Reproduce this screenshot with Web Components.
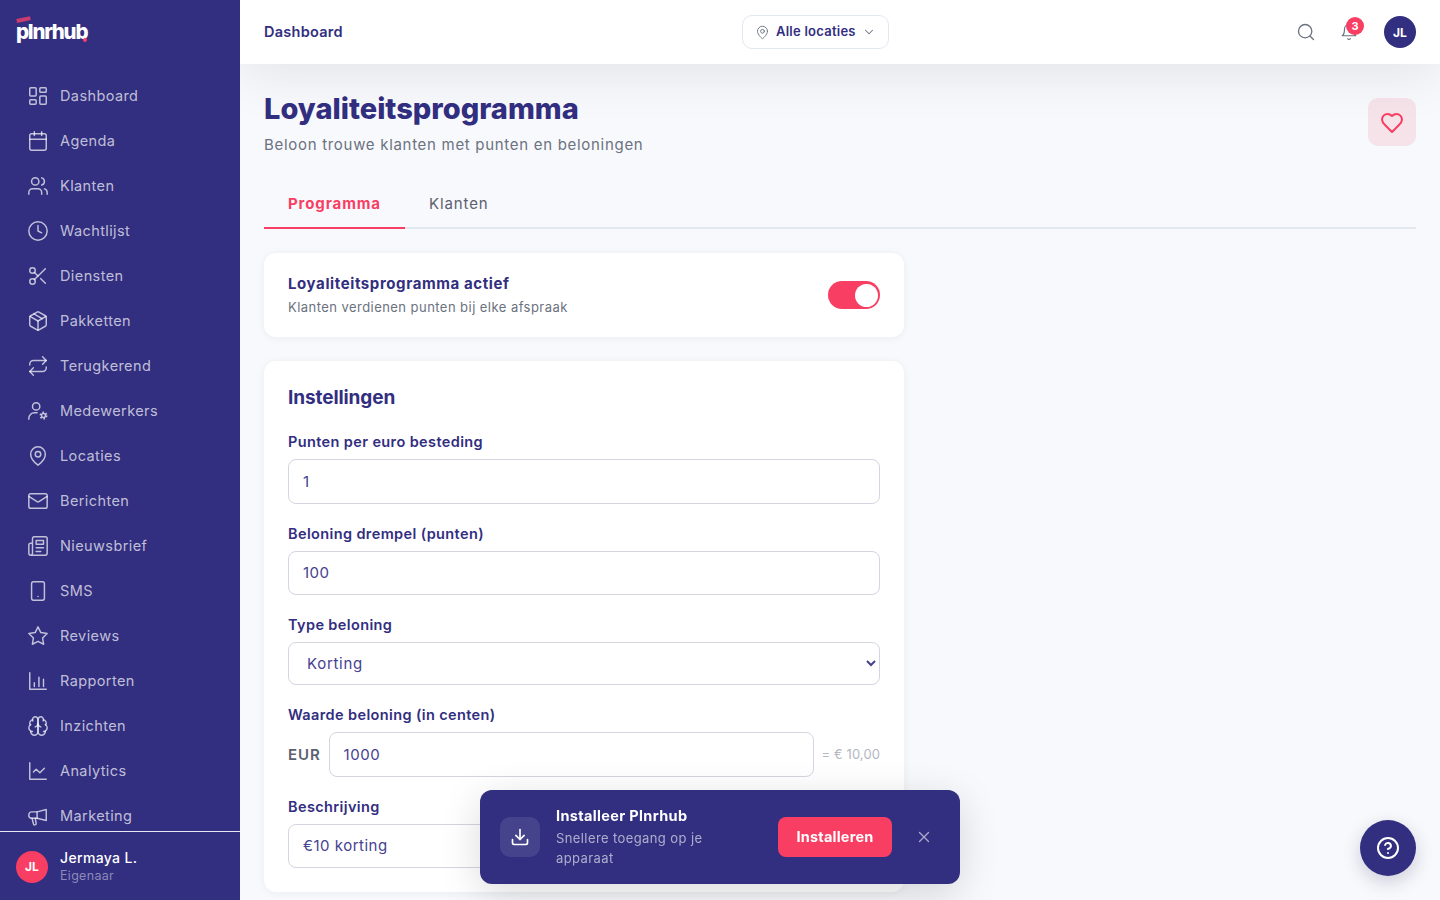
<!DOCTYPE html>
<html lang="nl">
<head>
<meta charset="utf-8">
<title>Loyaliteitsprogramma</title>
<style>
	html, body { margin: 0; height: 100%; overflow: hidden; }
	body { font-family: Inter, "Liberation Sans", sans-serif; background: #f8f9fc; color: #322e80; }
</style>
</head>
<body>
<app-shell>
	<side-nav slot="side">
		<nav-item icon="dashboard">Dashboard</nav-item>
		<nav-item icon="calendar">Agenda</nav-item>
		<nav-item icon="users">Klanten</nav-item>
		<nav-item icon="clock">Wachtlijst</nav-item>
		<nav-item icon="scissors">Diensten</nav-item>
		<nav-item icon="package">Pakketten</nav-item>
		<nav-item icon="repeat">Terugkerend</nav-item>
		<nav-item icon="usercog">Medewerkers</nav-item>
		<nav-item icon="pin">Locaties</nav-item>
		<nav-item icon="mail">Berichten</nav-item>
		<nav-item icon="news">Nieuwsbrief</nav-item>
		<nav-item icon="tablet">SMS</nav-item>
		<nav-item icon="star">Reviews</nav-item>
		<nav-item icon="bars">Rapporten</nav-item>
		<nav-item icon="brain">Inzichten</nav-item>
		<nav-item icon="chart">Analytics</nav-item>
		<nav-item icon="megaphone">Marketing</nav-item>
	</side-nav>
	<top-bar slot="top"></top-bar>
	<page-header>
		<span slot="title">Loyaliteitsprogramma</span>
		<span slot="sub">Beloon trouwe klanten met punten en beloningen</span>
	</page-header>
	<tab-bar></tab-bar>
	<toggle-card></toggle-card>
	<settings-card></settings-card>
</app-shell>
<install-banner></install-banner>
<help-button></help-button>

<script>
const ICONS = {
	dashboard: '<rect x="3" y="3" width="7" height="9" rx="1"/><rect x="14" y="3" width="7" height="5" rx="1"/><rect x="14" y="12" width="7" height="9" rx="1"/><rect x="3" y="16" width="7" height="5" rx="1"/>',
	calendar: '<path d="M8 2v4M16 2v4"/><rect x="3" y="4" width="18" height="18" rx="2"/><path d="M3 10h18"/>',
	users: '<path d="M16 21v-2a4 4 0 0 0-4-4H6a4 4 0 0 0-4 4v2"/><circle cx="9" cy="7" r="4"/><path d="M22 21v-2a4 4 0 0 0-3-3.87"/><path d="M16 3.13a4 4 0 0 1 0 7.75"/>',
	clock: '<circle cx="12" cy="12" r="10"/><path d="M12 6v6l4 2"/>',
	scissors: '<circle cx="6" cy="6" r="3"/><path d="M8.12 8.12 12 12"/><path d="M20 4 8.12 15.88"/><circle cx="6" cy="18" r="3"/><path d="M14.8 14.8 20 20"/>',
	package: '<path d="M11 21.73a2 2 0 0 0 2 0l7-4A2 2 0 0 0 21 16V8a2 2 0 0 0-1-1.73l-7-4a2 2 0 0 0-2 0l-7 4A2 2 0 0 0 3 8v8a2 2 0 0 0 1 1.73z"/><path d="M12 22V12"/><path d="M3.29 7 12 12l8.71-5"/><path d="m7.5 4.27 9 5.15"/>',
	repeat: '<path d="m17 2 4 4-4 4"/><path d="M3 11v-1a4 4 0 0 1 4-4h14"/><path d="m7 22-4-4 4-4"/><path d="M21 13v1a4 4 0 0 1-4 4H3"/>',
	usercog: '<circle cx="10" cy="7" r="4"/><path d="M2 21v-1a6 6 0 0 1 6-6h3"/><circle cx="18" cy="17" r="2.2"/><circle cx="18" cy="17" r="3.6" stroke-dasharray="1.9 1.9" stroke-linecap="butt"/>',
	pin: '<path d="M20 10c0 6-8 12-8 12s-8-6-8-12a8 8 0 0 1 16 0Z"/><circle cx="12" cy="10" r="3"/>',
	mail: '<rect x="2" y="4" width="20" height="16" rx="2"/><path d="m22 7-8.97 5.7a1.94 1.94 0 0 1-2.06 0L2 7"/>',
	news: '<path d="M4 22h16a2 2 0 0 0 2-2V4a2 2 0 0 0-2-2H8a2 2 0 0 0-2 2v16a2 2 0 0 1-2 2Zm0 0a2 2 0 0 1-2-2v-9c0-1.1.9-2 2-2h2"/><path d="M18 14h-8M15 18h-5M10 6h8v4h-8V6Z"/>',
	tablet: '<rect x="5" y="2" width="14" height="20" rx="2"/><path d="M12 18h.01"/>',
	star: '<path d="m12 2 3.09 6.26L22 9.27l-5 4.87 1.18 6.88L12 17.77l-6.18 3.25L7 14.14 2 9.27l6.91-1.01L12 2z"/>',
	bars: '<path d="M3 3v18h18"/><path d="M8 18v-4M13 18V8M18 18v-8"/>',
	brain: '<path d="M12 5a3 3 0 1 0-5.997.125 4 4 0 0 0-2.526 5.77 4 4 0 0 0 .556 6.588A4 4 0 1 0 12 18Z"/><path d="M12 5a3 3 0 1 1 5.997.125 4 4 0 0 1 2.526 5.77 4 4 0 0 1-.556 6.588A4 4 0 1 1 12 18Z"/><path d="M15 13a4.5 4.5 0 0 1-3-4 4.5 4.5 0 0 1-3 4"/><path d="M17.599 6.5a3 3 0 0 0 .399-1.375M6.003 5.125A3 3 0 0 0 6.401 6.5M3.477 10.896a4 4 0 0 1 .585-.396M19.938 10.5a4 4 0 0 1 .585.396M6 18a4 4 0 0 1-1.967-.516M19.967 17.484A4 4 0 0 1 18 18"/>',
	chart: '<path d="M3 3v18h18"/><path d="m19 9-5 5-4-4-3 3"/>',
	megaphone: '<path d="M21 5v12L11 14.5H5a3 3 0 0 1-3-3v-1a3 3 0 0 1 3-3h6L21 5Z"/><path d="M11 7.5v7"/><path d="m5.5 14.5 1.5 6a1.5 1.5 0 0 0 3-.6l-1-5.4"/>',
	search: '<circle cx="11" cy="11" r="8"/><path d="m21 21-4.3-4.3"/>',
	bell: '<path d="M6 8a6 6 0 0 1 12 0c0 7 3 9 3 9H3s3-2 3-9"/><path d="M10.3 21a1.94 1.94 0 0 0 3.4 0"/>',
	chevron: '<path d="m6 9 6 6 6-6"/>',
	heart: '<path d="M19 14c1.49-1.46 3-3.21 3-5.5A5.5 5.5 0 0 0 16.5 3c-1.76 0-3 .5-4.5 2-1.5-1.5-2.74-2-4.5-2A5.5 5.5 0 0 0 2 8.5c0 2.3 1.5 4.05 3 5.5l7 7Z"/>',
	download: '<path d="M21 15v4a2 2 0 0 1-2 2H5a2 2 0 0 1-2-2v-4"/><path d="m7 10 5 5 5-5"/><path d="M12 15V3"/>',
	close: '<path d="M18 6 6 18M6 6l12 12"/>',
	help: '<circle cx="12" cy="12" r="10"/><path d="M9.09 9a3 3 0 0 1 5.83 1c0 2-3 3-3 3"/><path d="M12 17h.01"/>'
};

function icon(name, size, width) {
	return `<svg width="${size}" height="${size}" viewBox="0 0 24 24" fill="none" stroke="currentColor" stroke-width="${width || 1.75}" stroke-linecap="round" stroke-linejoin="round">${ICONS[name]}</svg>`;
}

class Base extends HTMLElement {
	constructor() {
		super();
		this._root = this.attachShadow({mode: 'open'});
		this._root.innerHTML = this.markup();
	}
	markup() { return ''; }
}

class AppShell extends Base {
	markup() {
		return `
			<style>
				:host { display: grid; grid-template-columns: 240px 1fr; height: 100vh; overflow: hidden; }
				.main { min-width: 0; display: flex; flex-direction: column; height: 100vh; overflow: hidden; }
				.page { flex: 1; padding: 24px; overflow: hidden; }
			</style>
			<slot name="side"></slot>
			<div class="main">
				<slot name="top"></slot>
				<div class="page"><slot></slot></div>
			</div>
		`;
	}
}

class SideNav extends Base {
	markup() {
		return `
			<style>
				:host { display: flex; flex-direction: column; height: 100vh; background: #322e80; position: relative; z-index: 2; }
				.logo { height: 64px; padding: 0 0 0 16px; display: flex; align-items: center; flex: none; }
				.mark { position: relative; font: 800 20.5px/24px Inter, sans-serif; letter-spacing: -1.25px; color: #fff; }
				.mark::before { content: ""; position: absolute; left: 1px; top: -1px; width: 14px; height: 3.5px; background: #c93c6e; transform: rotate(-12deg); transform-origin: left bottom; }
				.mark::after { content: ""; position: absolute; right: 0; bottom: 2px; width: 4px; height: 4px; border-radius: 50%; background: #f83e62; }
				nav { flex: 1; min-height: 0; overflow: hidden; padding-top: 9px; }
				.foot { flex: none; height: 68px; border-top: 1px solid #e8e8f4; display: flex; align-items: center; gap: 12px; padding: 0 16px; }
				.av { width: 32px; height: 32px; border-radius: 50%; background: #f83e62; color: #fff; font-size: 12px; font-weight: 700; display: grid; place-items: center; margin-top: 1px; }
				.name { font-size: 14px; font-weight: 500; letter-spacing: .35px; color: #fff; line-height: 18px; }
				.role { font-size: 12.5px; letter-spacing: .3px; color: rgba(255,255,255,.45); line-height: 17px; }
			</style>
			<div class="logo"><span class="mark">plnrhub</span></div>
			<nav><slot></slot></nav>
			<div class="foot">
				<div class="av">JL</div>
				<div><div class="name">Jermaya L.</div><div class="role">Eigenaar</div></div>
			</div>
		`;
	}
}

class NavItem extends Base {
	markup() {
		const name = this.getAttribute('icon');
		return `
			<style>
				:host { display: flex; align-items: center; height: 45px; padding-left: 27px; gap: 11px; color: rgba(255,255,255,.7); font-size: 14.5px; letter-spacing: .4px; }
				svg { flex: none; }
			</style>
			${icon(name, 22, 1.6)}
			<span><slot></slot></span>
		`;
	}
}

class TopBar extends Base {
	markup() {
		return `
			<style>
				:host { display: flex; align-items: center; justify-content: space-between; flex: none; height: 64px; padding: 0 24px; background: #fff; box-shadow: 0 6px 56px rgba(0,0,0,.1); position: relative; z-index: 1; }
				.crumb { font-size: 14.5px; font-weight: 600; letter-spacing: .25px; padding-bottom: 2px; }
				.loc { display: flex; align-items: center; gap: 6px; height: 34px; box-sizing: border-box; padding: 0 12px; border: 1px solid #e2e8f0; border-radius: 10px; font-size: 13px; font-weight: 600; letter-spacing: .25px; }
				.loc span { padding-bottom: 2px; }
				.loc svg { color: #6b7280; flex: none; }
				.right { display: flex; align-items: center; }
				.btn { width: 36px; height: 36px; display: grid; place-items: center; color: #6b7280; position: relative; }
				.btn + .btn { margin-left: 7px; }
				.badge { position: absolute; left: 15px; top: 3px; width: 18px; height: 18px; border-radius: 50%; background: #f83e62; color: #fff; font-size: 11px; font-weight: 700; display: grid; place-items: center; }
				.av { width: 32px; height: 32px; border-radius: 50%; background: #322e80; color: #fff; font-size: 12px; font-weight: 700; display: grid; place-items: center; margin-left: 17px; }
			</style>
			<div class="crumb">Dashboard</div>
			<div class="loc">${icon('pin', 15, 1.5)}<span>Alle locaties</span>${icon('chevron', 14, 1.75)}</div>
			<div class="right">
				<div class="btn">${icon('search', 20, 1.6)}</div>
				<div class="btn">${icon('bell', 18, 1.6)}<span class="badge">3</span></div>
				<div class="av">JL</div>
			</div>
		`;
	}
}

class PageHeader extends Base {
	markup() {
		return `
			<style>
				:host { display: flex; justify-content: space-between; align-items: flex-start; padding-top: 4px; }
				.title { font-size: 29px; font-weight: 800; line-height: 34px; color: #322e80; }
				.sub { margin-top: 9px; font-size: 15px; line-height: 20px; letter-spacing: .7px; color: #6b7280; }
				.fav { width: 48px; height: 48px; border-radius: 10px; background: #f5e3e9; color: #f83e62; display: grid; place-items: center; margin-top: 6px; padding-top: 1px; box-sizing: border-box; }
			</style>
			<div>
				<div class="title"><slot name="title"></slot></div>
				<div class="sub"><slot name="sub"></slot></div>
			</div>
			<div class="fav">${icon('heart', 24, 2)}</div>
		`;
	}
}

class TabBar extends Base {
	markup() {
		return `
			<style>
				:host { display: flex; margin-top: 26px; border-bottom: 2px solid #e2e8f0; }
				.tab { padding: 0 24px; height: 46px; line-height: 46px; margin-bottom: -2px; border-bottom: 2px solid transparent; font-size: 15px; letter-spacing: .9px; color: #5b6070; }
				.on { color: #f83e62; font-weight: 700; letter-spacing: .9px; border-bottom-color: #f83e62; }
			</style>
			<div class="tab on">Programma</div>
			<div class="tab">Klanten</div>
		`;
	}
}

const cardCss = `
	display: block; width: 640px; box-sizing: border-box; background: #fff; border-radius: 12px;
	box-shadow: 0 1px 8px rgba(30,30,80,.06);
`;

class ToggleCard extends Base {
	markup() {
		return `
			<style>
				:host { ${cardCss} margin-top: 24px; }
				.row { display: flex; align-items: center; justify-content: space-between; height: 84px; padding: 0 24px; }
				.t { font-size: 15px; font-weight: 700; line-height: 20px; letter-spacing: .6px; }
				.s { font-size: 13px; line-height: 18px; margin-top: 4px; letter-spacing: .45px; color: #6b7280; }
				.sw { width: 52px; height: 28px; border-radius: 14px; background: #f83e62; display: flex; justify-content: flex-end; align-items: center; padding: 0 2px; box-sizing: border-box; }
				.sw i { width: 23px; height: 23px; border-radius: 50%; background: #fff; display: block; }
			</style>
			<div class="row">
				<div><div class="t">Loyaliteitsprogramma actief</div><div class="s">Klanten verdienen punten bij elke afspraak</div></div>
				<div class="sw"><i></i></div>
			</div>
		`;
	}
}

class FormField extends Base {
	markup() {
		return `
			<style>
				:host { display: block; margin-top: 21px; }
				label { display: block; font-size: 14.5px; font-weight: 600; line-height: 18px; margin-bottom: 8px; letter-spacing: .38px; }
			</style>
			<label>${this.getAttribute('label')}</label>
			<slot></slot>
		`;
	}
}

class SettingsCard extends Base {
	markup() {
		return `
			<style>
				:host { ${cardCss} margin-top: 24px; padding: 24px; height: 531px; }
				h2 { margin: 0 0 23px; font-size: 19px; font-weight: 700; line-height: 25px; letter-spacing: -.1px; }
				input, select { display: block; box-sizing: border-box; width: 100%; height: 44.5px; padding: 0 14px; border: 1px solid #d4d5e0; border-radius: 8px; background: #fff; color: #45418f; font: 15px Inter, sans-serif; letter-spacing: .5px; outline: none; }
				select { height: 43px; padding-left: 14px; letter-spacing: .7px; }
				.eur { display: flex; align-items: center; gap: 8px; }
				.eur b { font-size: 15px; font-weight: 600; color: #5b6070; letter-spacing: .9px; }
				.eur input { flex: 1; min-width: 0; }
				.eur span { font-size: 13px; letter-spacing: .1px; color: #b4b6c2; white-space: nowrap; }
			</style>
			<h2>Instellingen</h2>
			<form-field label="Punten per euro besteding"><input value="1"></form-field>
			<form-field label="Beloning drempel (punten)"><input value="100"></form-field>
			<form-field label="Type beloning"><select><option>Korting</option></select></form-field>
			<form-field label="Waarde beloning (in centen)">
				<div class="eur"><b>EUR</b><input value="1000"><span>= € 10,00</span></div>
			</form-field>
			<form-field label="Beschrijving"><input value="€10 korting"></form-field>
		`;
	}
}

class InstallBanner extends Base {
	markup() {
		return `
			<style>
				:host { position: fixed; left: 480px; top: 790px; width: 480px; height: 94px; box-sizing: border-box; padding: 0 20px; background: #322e80; border-radius: 12px; box-shadow: 0 10px 40px rgba(0,0,0,.15); display: flex; align-items: center; color: #fff; z-index: 5; }
				.ic { width: 40px; height: 40px; border-radius: 10px; background: rgba(255,255,255,.1); display: grid; place-items: center; flex: none; }
				.txt { margin-left: 16px; width: 198px; flex: none; }
				.t { font-size: 14.5px; font-weight: 700; line-height: 20px; letter-spacing: .35px; }
				.s { font-size: 13px; line-height: 20px; margin-top: 2px; letter-spacing: .4px; color: rgba(255,255,255,.6); width: 170px; }
				.go { margin-left: 24px; width: 114px; height: 40px; border-radius: 8px; background: #f83e62; font-size: 14.5px; font-weight: 700; letter-spacing: .2px; display: grid; place-items: center; flex: none; padding-bottom: 2px; box-sizing: border-box; }
				.x { margin-left: 23px; color: rgba(255,255,255,.6); display: grid; }
			</style>
			<div class="ic">${icon('download', 20, 2)}</div>
			<div class="txt"><div class="t">Installeer Plnrhub</div><div class="s">Snellere toegang op je apparaat</div></div>
			<div class="go">Installeren</div>
			<div class="x">${icon('close', 18, 1.75)}</div>
		`;
	}
}

class HelpButton extends Base {
	markup() {
		return `
			<style>
				:host { position: fixed; left: 1360px; top: 820px; width: 56px; height: 56px; border-radius: 50%; background: #322e80; color: #fff; display: grid; place-items: center; box-shadow: 0 6px 18px rgba(30,30,80,.2); z-index: 4; }
			</style>
			${icon('help', 24, 2)}
		`;
	}
}

window.customElements.define('app-shell', AppShell);
window.customElements.define('side-nav', SideNav);
window.customElements.define('nav-item', NavItem);
window.customElements.define('top-bar', TopBar);
window.customElements.define('page-header', PageHeader);
window.customElements.define('tab-bar', TabBar);
window.customElements.define('toggle-card', ToggleCard);
window.customElements.define('form-field', FormField);
window.customElements.define('settings-card', SettingsCard);
window.customElements.define('install-banner', InstallBanner);
window.customElements.define('help-button', HelpButton);
</script>
</body>
</html>
